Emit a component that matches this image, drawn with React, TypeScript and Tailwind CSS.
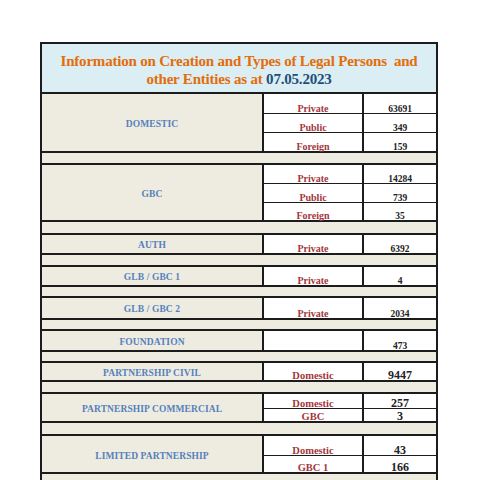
import React from "react";

type Sub = { label: string; value: string; big?: boolean; h: number };
type Group = { name: string; subs: Sub[]; spacerH: number };

const groups: Group[] = [
  {
    name: "DOMESTIC",
    subs: [
      { label: "Private", value: "63691", h: 20 },
      { label: "Public", value: "349", h: 19 },
      { label: "Foreign", value: "159", h: 18 },
    ],
    spacerH: 12,
  },
  {
    name: "GBC",
    subs: [
      { label: "Private", value: "14284", h: 19 },
      { label: "Public", value: "739", h: 19 },
      { label: "Foreign", value: "35", h: 17 },
    ],
    spacerH: 13,
  },
  { name: "AUTH", subs: [{ label: "Private", value: "6392", h: 18 }], spacerH: 12 },
  { name: "GLB / GBC 1", subs: [{ label: "Private", value: "4", h: 18 }], spacerH: 11 },
  { name: "GLB / GBC 2", subs: [{ label: "Private", value: "2034", h: 20 }], spacerH: 11 },
  { name: "FOUNDATION", subs: [{ label: "", value: "473", h: 19 }], spacerH: 11 },
  {
    name: "PARTNERSHIP CIVIL",
    subs: [{ label: "Domestic", value: "9447", big: true, h: 17 }],
    spacerH: 12,
  },
  {
    name: "PARTNERSHIP COMMERCIAL",
    subs: [
      { label: "Domestic", value: "257", big: true, h: 15 },
      { label: "GBC", value: "3", big: true, h: 12 },
    ],
    spacerH: 13,
  },
  {
    name: "LIMITED PARTNERSHIP",
    subs: [
      { label: "Domestic", value: "43", big: true, h: 20 },
      { label: "GBC 1", value: "166", big: true, h: 16 },
    ],
    spacerH: 14,
  },
];

export default function App() {
  return (
    <div className="w-[480px] h-[480px] overflow-hidden bg-white pt-[42px] pl-[40px] font-['Liberation_Serif','Times_New_Roman',serif]">
      <div className="w-[398px] border-l-2 border-r-2 border-t-2 border-[#1c1c1c] bg-[#eeece1]">
        <div className="h-[50px] bg-[#daeef3] border-b-2 border-[#1c1c1c] flex flex-col items-center justify-center text-center font-bold text-[15px] tracking-[-0.2px] leading-[18px] text-[#e46c0a] pt-[3px]">
          <div className="whitespace-pre">Information on Creation and Types of Legal Persons  and</div>
          <div>
            other Entities as at <span className="text-[#1f4e79]">07.05.2023</span>
          </div>
        </div>
        {groups.map((g) => (
          <div key={g.name}>
            <div className="flex border-b-2 border-[#1c1c1c]">
              <div className="w-[220px] flex items-center justify-center pt-[3px] text-[9.5px] tracking-[0.1px] font-bold text-[#5580bb]">
                {g.name}
              </div>
              <div className="flex-1 flex flex-col">
                {g.subs.map((s, i) => (
                  <div
                    key={i}
                    className={`flex bg-white ${i < g.subs.length - 1 ? "border-b border-[#1c1c1c]" : ""}`}
                    style={{ height: s.h }}
                  >
                    <div
                      className={`w-[100px] border-l-2 border-[#1c1c1c] flex items-end justify-center font-bold text-[#a3373b] ${
                        s.big ? "text-[10.5px] leading-[8.5px]" : "text-[10px] leading-[8px]"
                      }`}
                    >
                      {s.label}
                    </div>
                    <div
                      className={`flex-1 border-l-2 border-[#1c1c1c] flex items-end justify-center font-bold text-[#222] ${
                        s.big ? "text-[12px] leading-[10px]" : "text-[9.5px] leading-[7.5px]"
                      }`}
                    >
                      {s.value}
                    </div>
                  </div>
                ))}
              </div>
            </div>
            <div className="border-b-2 border-[#1c1c1c]" style={{ height: g.spacerH }} />
          </div>
        ))}
      </div>
    </div>
  );
}
